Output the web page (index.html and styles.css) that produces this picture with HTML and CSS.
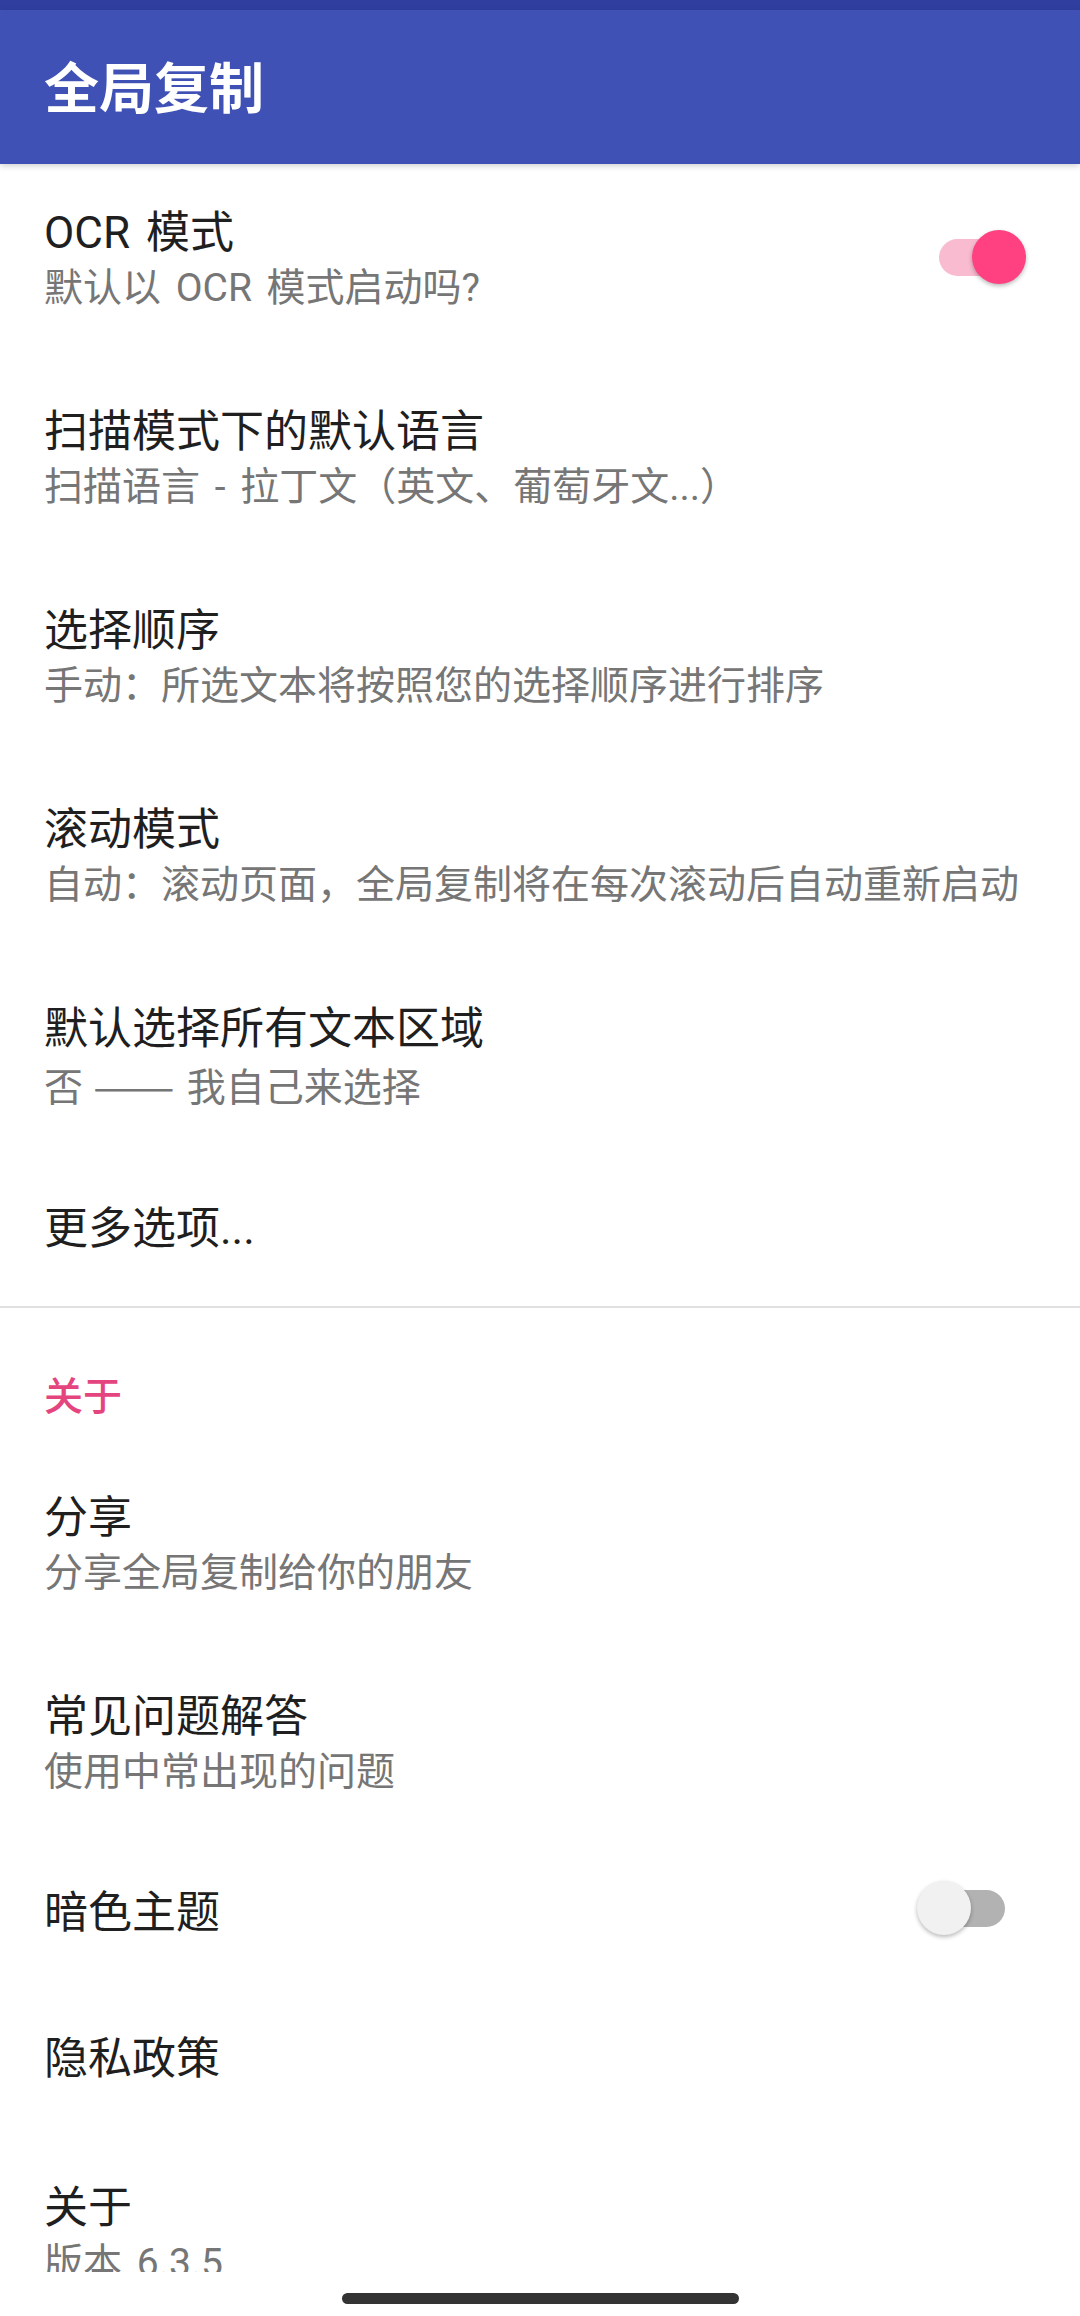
FILE: index.html
```html
<!DOCTYPE html>
<html>
<head>
    <meta charset="utf-8">
    <title>全局复制 设置</title>
    <link rel="stylesheet" href="styles.css">
</head>
<body>
    <div class="screen">
        <div class="status-bar"></div>
        <header class="app-bar">
            <h1 class="app-title">全局复制</h1>
        </header>

        <main class="prefs">
            <div class="pref">
                <div class="pref-text">
                    <div class="pref-title">OCR 模式</div>
                    <div class="pref-summary">默认以 OCR 模式启动吗?</div>
                </div>
                <div class="switch on"><span class="track"></span><span class="thumb"></span></div>
            </div>

            <div class="pref">
                <div class="pref-text">
                    <div class="pref-title">扫描模式下的默认语言</div>
                    <div class="pref-summary">扫描语言 - 拉丁文（英文、葡萄牙文...）</div>
                </div>
            </div>

            <div class="pref">
                <div class="pref-text">
                    <div class="pref-title">选择顺序</div>
                    <div class="pref-summary">手动：所选文本将按照您的选择顺序进行排序</div>
                </div>
            </div>

            <div class="pref">
                <div class="pref-text">
                    <div class="pref-title">滚动模式</div>
                    <div class="pref-summary">自动：滚动页面，全局复制将在每次滚动后自动重新启动</div>
                </div>
            </div>

            <div class="pref">
                <div class="pref-text">
                    <div class="pref-title">默认选择所有文本区域</div>
                    <div class="pref-summary">否 <span class="dash">——</span> 我自己来选择</div>
                </div>
            </div>

            <div class="pref single compact">
                <div class="pref-text">
                    <div class="pref-title">更多选项...</div>
                </div>
            </div>

            <div class="divider"></div>
            <div class="category">关于</div>

            <div class="pref">
                <div class="pref-text">
                    <div class="pref-title">分享</div>
                    <div class="pref-summary">分享全局复制给你的朋友</div>
                </div>
            </div>

            <div class="pref">
                <div class="pref-text">
                    <div class="pref-title">常见问题解答</div>
                    <div class="pref-summary">使用中常出现的问题</div>
                </div>
            </div>

            <div class="pref single">
                <div class="pref-text">
                    <div class="pref-title">暗色主题</div>
                </div>
                <div class="switch"><span class="track"></span><span class="thumb"></span></div>
            </div>

            <div class="pref single">
                <div class="pref-text">
                    <div class="pref-title">隐私政策</div>
                </div>
            </div>

            <div class="pref">
                <div class="pref-text">
                    <div class="pref-title">关于</div>
                    <div class="pref-summary">版本 6.3.5</div>
                </div>
            </div>
        </main>

        <div class="nav-bar"><span class="home-indicator"></span></div>
    </div>
</body>
</html>
```

FILE: styles.css
```css
html, body { margin: 0; padding: 0; background: #fff; }
body { font-family: Roboto, "Noto Sans CJK SC", sans-serif; color: #212121; }

.screen {
    height: 100vh;
    display: flex;
    flex-direction: column;
    overflow: hidden;
}

.status-bar { height: 10px; background: #303f9f; flex-shrink: 0; }

.app-bar {
    height: 154px;
    flex-shrink: 0;
    display: flex;
    align-items: center;
    padding: 0 44px;
    background: #3f51b5;
    box-shadow: 0 2px 6px rgba(0,0,0,0.18);
    position: relative;
    z-index: 1;
}
.app-title {
    margin: 0;
    color: #fff;
    font-size: 55px;
    font-weight: 700;
    line-height: 60px;
    padding-top: 4px;
}

.prefs { flex: 1; overflow: hidden; }

.pref {
    display: flex;
    align-items: center;
    padding: 43px 44px 46px;
}
.pref.single { padding: 40px 44px 54px; }
.pref.compact { padding-bottom: 51px; }
.pref-text { flex: 1; min-width: 0; }
.pref-title { font-size: 44px; line-height: 52px; color: #1f1f1f; white-space: nowrap; word-spacing: 5px; }
.pref-summary { font-size: 39px; line-height: 58px; color: #767676; white-space: nowrap; word-spacing: 5px; }

/* full width dashes, as the phone draws them */
.dash {
    display: inline-block;
    font-family: "Noto Sans CJK SC", sans-serif;
    transform: scaleX(1.25);
    transform-origin: left center;
    margin: 0 14px 0 -5px;
}

.divider { height: 2px; background: #e0e0e0; }

.category {
    padding: 69px 44px 32px;
    font-size: 39px;
    line-height: 40px;
    font-weight: 500;
    color: #e5457e;
}

/* switch: track with the round thumb on top */
.switch {
    position: relative;
    width: 109px;
    height: 54px;
    margin: -11px 10px 0 0;
    flex-shrink: 0;
}
.switch .track {
    position: absolute;
    left: 22px;
    right: 21px;
    top: 9px;
    height: 37px;
    border-radius: 19px;
    background: #b2b2b2;
}
.switch .thumb {
    position: absolute;
    top: 0;
    left: 0;
    width: 54px;
    height: 54px;
    border-radius: 50%;
    background: #f1f1f1;
    box-shadow: 0 2px 4px rgba(0,0,0,0.28);
}
.switch.on .track { background: #f8bbd0; }
.switch.on .thumb { left: auto; right: 0; background: #ff4081; }

.nav-bar {
    height: 44px;
    flex-shrink: 0;
    background: #fff;
    display: flex;
    justify-content: center;
    padding-top: 21px;
    box-sizing: border-box;
}
.home-indicator {
    width: 397px;
    height: 11px;
    border-radius: 6px;
    background: #333;
}
```
